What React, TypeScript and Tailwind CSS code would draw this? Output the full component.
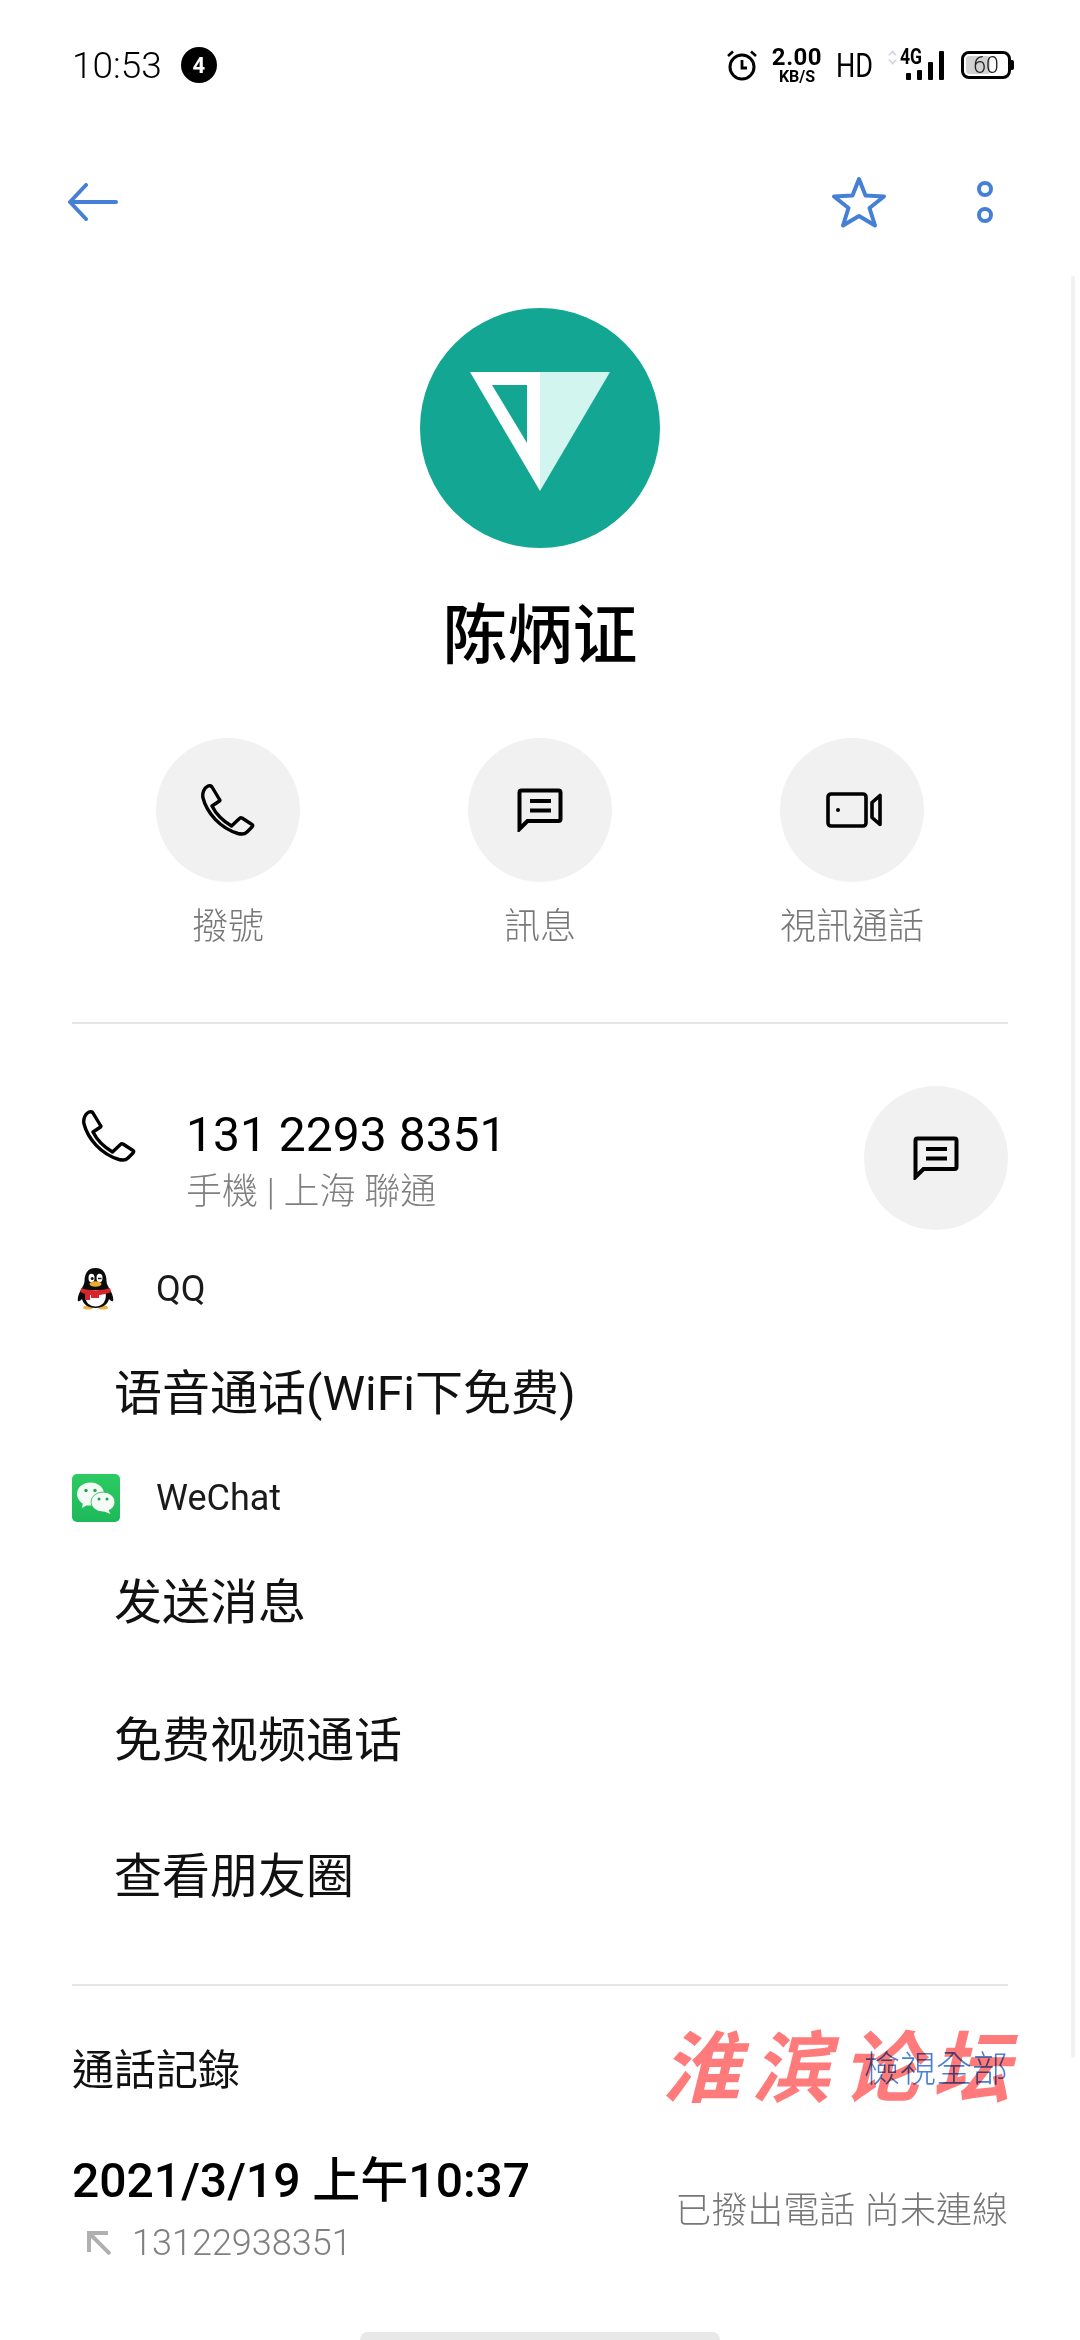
import React from "react"

const SC = "font-['Roboto','Noto_Sans_CJK_SC',sans-serif]"

function PhoneIcon({ className }: { className: string }) {
  return (
    <svg className={className} viewBox="0 0 54 52" fill="none" stroke="currentColor" strokeWidth="3.4" strokeLinejoin="round">
      <path d="M7 2C3 4 1 9 2 14C6 29 19 44 37 49.500C41 50.500 44 50 46 48L51 43C52 42 52 41 51 40.500L41 34C40 33.500 39.500 33.500 39 34L30.500 42C22 37 15 30 11 22L18.500 17C19 16.500 19 16 18.500 15.500L11 3C10 1.500 8.500 1.500 7 2Z" />
    </svg>
  )
}

function MessageIcon({ className }: { className: string }) {
  return (
    <svg className={className} viewBox="0 0 46 44" fill="none">
      <path d="M2.500 41V4.500C2.500 3.400 3.400 2.500 4.500 2.500H41.500C42.600 2.500 43.500 3.400 43.500 4.500V31C43.500 32.100 42.600 33 41.500 33H10.500L2.500 41Z" stroke="currentColor" strokeWidth="4" />
      <rect x="13" y="11" width="21" height="4" fill="currentColor" />
      <rect x="13" y="20.500" width="21" height="4" fill="currentColor" />
    </svg>
  )
}

function VideoIcon({ className }: { className: string }) {
  return (
    <svg className={className} viewBox="0 0 56 36" fill="none" stroke="currentColor" strokeWidth="3.6">
      <rect x="2" y="2" width="38" height="32" rx="3" />
      <circle cx="12" cy="18" r="2" fill="currentColor" stroke="none" />
      <path d="M54 3.500V32.500L46 25.500V10.500L54 3.500Z" strokeLinejoin="round" />
    </svg>
  )
}

function QQIcon() {
  return (
    <svg className="w-[37px] h-[42px]" viewBox="0 0 37 42">
      <ellipse cx="11" cy="39.500" rx="5" ry="2" fill="#f2b33d" />
      <ellipse cx="26" cy="39.500" rx="5" ry="2" fill="#f2b33d" />
      <path d="M18.500 0C10.500 0 7.500 6 7.500 13C7.500 15 6.500 17 5 20C2 25 0 30 1 33C2 34 4 32 5 31C6 36 11 40 18.500 40C26 40 31 36 32 31C33 32 35 34 36 33C37 30 35 25 32 20C30.500 17 29.500 15 29.500 13C29.500 6 26.500 0 18.500 0Z" fill="#0b0b0b" />
      <path d="M9 22H28C30 28 29 38 18.500 38.500C8 38 7 28 9 22Z" fill="#fff" />
      <ellipse cx="14.500" cy="10" rx="3" ry="4.200" fill="#fff" />
      <ellipse cx="22.500" cy="10" rx="3" ry="4.200" fill="#fff" />
      <circle cx="15.200" cy="10.500" r="1.500" fill="#111" />
      <path d="M21 10.500H24.500" stroke="#111" strokeWidth="1.400" />
      <ellipse cx="18.500" cy="16" rx="6" ry="2.800" fill="#f0a92e" />
      <path d="M4 20C12 23 25 23 33 20L34 24C30 26 24 27 22 27V30H14V27C11 27 7 26 3.500 24Z" fill="#d8252b" />
      <rect x="8" y="26" width="5" height="6" fill="#d8252b" />
    </svg>
  )
}

function WeChatIcon() {
  return (
    <svg className="w-[48px] h-[48px]" viewBox="0 0 48 48">
      <defs>
        <linearGradient id="wechat-bg" x1="0" y1="0" x2="0" y2="1">
          <stop offset="0" stopColor="#2ccb62" />
          <stop offset="1" stopColor="#1eb85a" />
        </linearGradient>
      </defs>
      <rect width="48" height="48" rx="5" fill="url(#wechat-bg)" />
      <ellipse cx="18.500" cy="20" rx="13.500" ry="11.500" fill="#f4fbf6" />
      <path d="M11 28L10 34L17 30Z" fill="#f4fbf6" />
      <ellipse cx="31" cy="28" rx="12" ry="10" fill="#f4fbf6" stroke="#1eb85a" strokeWidth="0.800" />
      <path d="M36 35L38.500 40L31 37Z" fill="#f4fbf6" />
      <circle cx="14" cy="16.500" r="1.700" fill="#2a9d5c" />
      <circle cx="23" cy="16.500" r="1.700" fill="#2a9d5c" />
      <circle cx="27" cy="25" r="1.500" fill="#2a9d5c" />
      <circle cx="35" cy="25" r="1.500" fill="#2a9d5c" />
    </svg>
  )
}

function StatusBar() {
  return (
    <div className="h-[130px] pl-[72px] pr-[66px] flex items-center justify-between">
      <div className="flex items-center gap-[19px]">
        <span className="text-[37px] font-light leading-none text-black">10:53</span>
        <span className="w-[36px] h-[36px] rounded-full bg-black text-white text-[22px] font-bold flex items-center justify-center">4</span>
      </div>
      <div className="flex items-center">
        <svg className="w-[32px] h-[32px] text-black" viewBox="0 0 32 32" fill="none" stroke="currentColor" strokeWidth="3">
          <circle cx="16" cy="18" r="12" />
          <path d="M16 11V19H21" strokeWidth="2.800" />
          <path d="M2 7L7 2.500M30 7L25 2.500" strokeWidth="2.600" />
        </svg>
        <div className="ml-[15px] w-[48px] flex flex-col items-center text-black font-bold">
          <span className="text-[24px] leading-[22px] tracking-[0.5px]">2.00</span>
          <span className="text-[16px] leading-[16px] mt-[1px]">KB/S</span>
        </div>
        <span className="ml-[11px] w-[44px] text-center text-[33px] leading-none text-black scale-x-[0.82]">HD</span>
        <svg className="ml-[12px] mb-[16px] w-[9px] h-[15px] text-gray-300" viewBox="0 0 9 15" fill="currentColor">
          <path d="M4.500 0L9 5.500H7L4.500 2.800L2 5.500H0ZM4.500 15L0 9.500H2L4.500 12.200L7 9.500H9Z" />
        </svg>
        <div className="relative ml-[3px] w-[44px] h-[30px] flex items-end gap-[6px] pl-[6px]">
          <span className="absolute left-0 top-[-3px] text-[22px] leading-[20px] font-bold text-black scale-x-[0.8] origin-left">4G</span>
          <span className="w-[5px] h-[7px] bg-black rounded-[1px]" />
          <span className="w-[5px] h-[10px] bg-black rounded-[1px]" />
          <span className="w-[5px] h-[18px] bg-black rounded-[1px]" />
          <span className="w-[5px] h-[29px] bg-black rounded-[1px]" />
        </div>
        <div className="ml-[17px] flex items-center">
          <div className="relative w-[50px] h-[28px] rounded-[8px] border-[3px] border-black overflow-hidden flex items-center justify-center">
            <span className="absolute left-[2px] top-[2px] bottom-[2px] w-[24px] rounded-[3px] bg-[#d2d2d2]" />
            <span className="relative text-[23px] leading-none font-light text-[#222]">60</span>
          </div>
          <span className="w-[3px] h-[10px] bg-black rounded-r-[2px]" />
        </div>
      </div>
    </div>
  )
}

function Toolbar() {
  return (
    <div className="h-[144px] pl-[68px] pr-[87px] flex items-center justify-between text-[#457fd6]">
      <svg className="w-[50px] h-[38px]" viewBox="0 0 50 38" fill="none" stroke="currentColor" strokeWidth="4" strokeLinecap="round" strokeLinejoin="round">
        <path d="M48 19H3M18 2L2 19L18 36" />
      </svg>
      <div className="flex items-center gap-[90px]">
        <svg className="w-[56px] h-[54px]" viewBox="0 0 56 54" fill="none" stroke="currentColor" strokeWidth="4" strokeLinejoin="round">
          <path d="M28 4L34.500 20.500L53 21.500L38.500 33L44 50.500L28 41L12 50.500L17.500 33L3 21.500L21.500 20.500Z" />
        </svg>
        <div className="flex flex-col gap-[10px]">
          <span className="w-[16px] h-[16px] rounded-full border-[4px] border-current" />
          <span className="w-[16px] h-[16px] rounded-full border-[4px] border-current" />
        </div>
      </div>
    </div>
  )
}

function Avatar() {
  return (
    <div className="w-[240px] h-[240px] mt-[34px] mx-auto rounded-full bg-[#13a692]">
      <svg className="w-[240px] h-[240px]" viewBox="0 0 240 240">
        <path d="M50 64H120V183Z" fill="#fff" />
        <path d="M120 64H190L120 183Z" fill="#d2f6ef" />
        <path d="M72 77H107V135Z" fill="#13a692" />
      </svg>
    </div>
  )
}

function Action({ label, children }: { label: string; children: React.ReactNode }) {
  return (
    <div className="w-[144px] flex flex-col items-center">
      <div className="w-[144px] h-[144px] rounded-full bg-[#f1f1f1] flex items-center justify-center text-black">
        {children}
      </div>
      <span className="mt-[20px] h-[50px] text-[36px] leading-[50px] whitespace-nowrap font-light text-[#787878]">{label}</span>
    </div>
  )
}

function AppHeader({ icon, name, className }: { icon: React.ReactNode; name: string; className: string }) {
  return (
    <div className={`h-[60px] flex items-center ${className}`}>
      {icon}
      <span className="text-[36px] text-[#1a1a1a]">{name}</span>
    </div>
  )
}

export default function App() {
  return (
    <div className="relative w-[1080px] h-[2340px] overflow-hidden bg-white font-['Roboto','Noto_Sans_CJK_TC',sans-serif]">
      <StatusBar />
      <Toolbar />
      <Avatar />

      <div className={`mt-[44px] h-[88px] text-center text-[65px] leading-[88px] font-medium text-black ${SC}`}>陈炳证</div>

      <div className="mt-[58px] px-[156px] flex justify-between">
        <Action label="撥號">
          <PhoneIcon className="w-[54px] h-[52px]" />
        </Action>
        <Action label="訊息">
          <MessageIcon className="w-[46px] h-[44px]" />
        </Action>
        <Action label="視訊通話">
          <VideoIcon className="w-[56px] h-[36px] ml-[4px]" />
        </Action>
      </div>

      <div className="mt-[70px] mx-[72px] h-[2px] bg-[#e6e6e6]" />

      {/* Phone number row */}
      <div className="mt-[62px] h-[144px] pl-[82px] pr-[72px] flex items-center justify-between">
        <div className="flex items-start">
          <PhoneIcon className="w-[54px] h-[52px] mt-[8px] text-black" />
          <div className="ml-[50px] flex flex-col mt-[5px]">
            <span className="text-[48px] leading-[56px] text-black">131 2293 8351</span>
            <span className="mt-[6px] text-[36px] leading-[46px] font-light text-[#808080]">手機 | 上海 聯通</span>
          </div>
        </div>
        <div className="w-[144px] h-[144px] rounded-full bg-[#f1f1f1] flex items-center justify-center text-black">
          <MessageIcon className="w-[46px] h-[44px]" />
        </div>
      </div>

      <AppHeader className="mt-[29px] pl-[77px] gap-[42px]" icon={<QQIcon />} name="QQ" />
      <div className={`mt-[40px] h-[70px] pl-[114px] text-[48px] leading-[70px] text-[#111] ${SC}`}>语音通话(WiFi下免费)</div>
      <AppHeader className="mt-[39px] pl-[72px] gap-[36px]" icon={<WeChatIcon />} name="WeChat" />

      <div className={`mt-[6px] flex flex-col pl-[114px] text-[48px] text-[#111] ${SC}`}>
        <span className="h-[138px] leading-[138px]">发送消息</span>
        <span className="h-[137px] leading-[137px]">免费视频通话</span>
        <span className="h-[136px] leading-[136px]">查看朋友圈</span>
      </div>

      <div className="mt-[39px] mx-[72px] h-[2px] bg-[#e6e6e6]" />

      {/* Call log */}
      <div className="mt-[54px] h-[60px] px-[72px] flex items-center justify-between">
        <span className="text-[42px] text-[#111]">通話記錄</span>
        <span className="text-[36px] font-light text-[#4a80d4]">檢視全部</span>
      </div>
      <div className="mt-[49px] px-[72px] flex items-center justify-between">
        <div className="flex flex-col">
          <span className="h-[64px] text-[48px] leading-[64px] font-medium text-black">2021/3/19 上午10:37</span>
          <div className="mt-[5px] h-[50px] pl-[15px] flex items-center gap-[21px]">
            <svg className="w-[24px] h-[24px] text-[#b0b0b0]" viewBox="0 0 24 24" fill="none" stroke="currentColor" strokeWidth="4">
              <path d="M23 23L3 3M2 21V2H21" />
            </svg>
            <span className="text-[36px] font-light text-[#808080]">13122938351</span>
          </div>
        </div>
        <span className="mt-[4px] text-[36px] font-light text-[#777]">已撥出電話 尚未連線</span>
      </div>

      {/* Watermark */}
      <div className={`absolute left-[662px] top-[2020px] text-[78px] leading-[100px] font-bold italic tracking-[12px] whitespace-nowrap text-[#ff7b7b] mix-blend-multiply ${SC}`}>淮滨论坛</div>

      {/* Scrollbars */}
      <div className="absolute right-[5px] top-[276px] bottom-[282px] w-[4px] rounded-full bg-[#f2f2f2]" />
      <div className="absolute left-[360px] bottom-0 w-[360px] h-[8px] rounded-t-full bg-[#e8e8e8]" />
    </div>
  )
}
